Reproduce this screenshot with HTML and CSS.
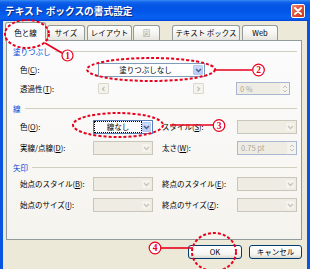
FILE: index.html
```html
<!DOCTYPE html>
<html lang="ja">
<head>
<meta charset="utf-8">
<title>テキスト ボックスの書式設定</title>
<link rel="stylesheet" href="styles.css">
</head>
<body>
<div class="window">
  <div class="titlebar">
    <span class="title">テキスト ボックスの書式設定</span>
    <span class="close"><svg width="8" height="8" viewBox="0 0 8 8"><path d="M1 1L7 7M7 1L1 7" stroke="#fff" stroke-width="1.8" stroke-linecap="round"/></svg></span>
  </div>
  <div class="client">
    <div class="tabs">
      <div class="tab active t1">色と線</div>
      <div class="tab t2">サイズ</div>
      <div class="tab t3">レイアウト</div>
      <div class="tab disabled t4">図</div>
      <div class="tab t5">テキスト ボックス</div>
      <div class="tab t6">Web</div>
    </div>
    <div class="panel">
      <div class="sec s1"><span class="sec-title">塗りつぶし</span><i class="rule"></i></div>
      <div class="frow r1">
        <span class="lbl fl">色(<u>C</u>):</span>
        <div class="combo wide"><span class="val">塗りつぶしなし</span><span class="arrow"><svg width="7" height="5" viewBox="0 0 7 5"><path d="M1 1L3.5 3.5L6 1" fill="none" stroke="#4D6185" stroke-width="1.5"/></svg></span></div>
      </div>
      <div class="frow r2">
        <span class="lbl fl">透過性(<u>T</u>):</span>
        <div class="slider">
          <span class="sbtn"><svg width="5" height="6" viewBox="0 0 5 6"><path d="M3.5 1L1.5 3L3.5 5" fill="none" stroke="#C2C0B4" stroke-width="1.3"/></svg></span>
          <span class="sbtn"><svg width="5" height="6" viewBox="0 0 5 6"><path d="M1.5 1L3.5 3L1.5 5" fill="none" stroke="#C2C0B4" stroke-width="1.3"/></svg></span>
        </div>
        <div class="spin s-a"><span class="val">0 %</span><span class="updown"><svg width="6" height="10" viewBox="0 0 6 10"><path d="M1 4L3 2L5 4M1 6L3 8L5 6" fill="none" stroke="#C2C0B4" stroke-width="1"/></svg></span></div>
      </div>

      <div class="sec s2"><span class="sec-title">線</span><i class="rule"></i></div>
      <div class="lrow r3">
        <span class="lbl ll">色(<u>O</u>):</span>
        <div class="combo focus"><span class="val"><span class="focusrect">線なし</span></span><span class="arrow"><svg width="7" height="5" viewBox="0 0 7 5"><path d="M1 1L3.5 3.5L6 1" fill="none" stroke="#4D6185" stroke-width="1.5"/></svg></span></div>
        <span class="lbl lr">スタイル(<u>S</u>):</span>
        <div class="combo dis"><span class="val"></span><span class="arrow"><svg width="7" height="5" viewBox="0 0 7 5"><path d="M1 1L3.5 3.5L6 1" fill="none" stroke="#C9C7BA" stroke-width="1.5"/></svg></span></div>
      </div>
      <div class="lrow r4">
        <span class="lbl ll">実線/点線(<u>D</u>):</span>
        <div class="combo dis"><span class="val"></span><span class="arrow"><svg width="7" height="5" viewBox="0 0 7 5"><path d="M1 1L3.5 3.5L6 1" fill="none" stroke="#C9C7BA" stroke-width="1.5"/></svg></span></div>
        <span class="lbl lr">太さ(<u>W</u>):</span>
        <div class="spin s-b"><span class="val">0.75 pt</span><span class="updown"><svg width="6" height="10" viewBox="0 0 6 10"><path d="M1 4L3 2L5 4M1 6L3 8L5 6" fill="none" stroke="#C2C0B4" stroke-width="1"/></svg></span></div>
      </div>

      <div class="sec s3"><span class="sec-title">矢印</span><i class="rule"></i></div>
      <div class="lrow r5">
        <span class="lbl ll">始点のスタイル(<u>B</u>):</span>
        <div class="combo dis"><span class="val"></span><span class="arrow"><svg width="7" height="5" viewBox="0 0 7 5"><path d="M1 1L3.5 3.5L6 1" fill="none" stroke="#C9C7BA" stroke-width="1.5"/></svg></span></div>
        <span class="lbl lr">終点のスタイル(<u>E</u>):</span>
        <div class="combo dis"><span class="val"></span><span class="arrow"><svg width="7" height="5" viewBox="0 0 7 5"><path d="M1 1L3.5 3.5L6 1" fill="none" stroke="#C9C7BA" stroke-width="1.5"/></svg></span></div>
      </div>
      <div class="lrow r6">
        <span class="lbl ll">始点のサイズ(<u>I</u>):</span>
        <div class="combo dis"><span class="val"></span><span class="arrow"><svg width="7" height="5" viewBox="0 0 7 5"><path d="M1 1L3.5 3.5L6 1" fill="none" stroke="#C9C7BA" stroke-width="1.5"/></svg></span></div>
        <span class="lbl lr">終点のサイズ(<u>Z</u>):</span>
        <div class="combo dis"><span class="val"></span><span class="arrow"><svg width="7" height="5" viewBox="0 0 7 5"><path d="M1 1L3.5 3.5L6 1" fill="none" stroke="#C9C7BA" stroke-width="1.5"/></svg></span></div>
      </div>
    </div>
    <div class="buttons">
      <button class="btn ok">OK</button>
      <button class="btn cancel">キャンセル</button>
    </div>
  </div>

  <svg class="annot" width="310" height="269" viewBox="0 0 310 269">
    <g fill="none" stroke="#E8001C" stroke-width="2" stroke-dasharray="3 2">
      <ellipse cx="27" cy="34" rx="22" ry="14"/>
      <ellipse cx="151" cy="69.5" rx="64" ry="11.5"/>
      <ellipse cx="118" cy="125" rx="45" ry="12"/>
      <ellipse cx="214" cy="252" rx="22" ry="19"/>
    </g>
    <g stroke="#E8001C" stroke-width="1.6">
      <line x1="45" y1="43" x2="62" y2="53"/>
      <line x1="215" y1="70" x2="252" y2="70"/>
      <line x1="170" y1="125" x2="213" y2="125"/>
      <line x1="161" y1="248" x2="193" y2="248"/>
    </g>
    <g fill="#fff" stroke="#E8001C" stroke-width="1.2">
      <circle cx="67.5" cy="55.5" r="5.5"/>
      <circle cx="258.5" cy="70" r="5.8"/>
      <circle cx="219" cy="125.5" r="5.8"/>
      <circle cx="155" cy="248" r="5.8"/>
    </g>
    <g class="num" fill="#E8001C" text-anchor="middle">
      <text x="67.5" y="58.8">1</text>
      <text x="258.5" y="73.3">2</text>
      <text x="219" y="128.8">3</text>
      <text x="155" y="251.3">4</text>
    </g>
  </svg>
</div>
</body>
</html>
```

FILE: styles.css
```css
* { box-sizing: border-box; margin: 0; padding: 0; }
html, body { width: 310px; height: 269px; overflow: hidden; }
body {
  font-family: "Noto Sans CJK JP", "Noto Sans", sans-serif;
  font-size: 7.5px;
  color: #000;
  background: #ECE9D8;
}
u { text-decoration: underline; text-underline-offset: 1px; }

.window {
  position: relative;
  width: 310px;
  height: 269px;
  display: flex;
  flex-direction: column;
}

.titlebar {
  height: 21px;
  flex: none;
  display: flex;
  align-items: center;
  justify-content: space-between;
  padding: 0 5px 0 5px;
  background: linear-gradient(#3B8CF4 0px, #1266EC 2px, #0556E4 5px, #0154E6 50%, #0760F0 80%, #055BEC 92%, #003FD4 100%);
}
.title {
  color: #fff;
  font-weight: bold;
  font-size: 9.7px;
  text-shadow: 1px 1px 0 #0A2A8C;
  white-space: nowrap;
}
.close {
  width: 14px;
  height: 14px;
  margin-top: 1px;
  border: 1px solid #fff;
  border-radius: 2px;
  background: linear-gradient(135deg, #F08B6C 0%, #E2553A 45%, #C9371A 100%);
  display: flex;
  align-items: center;
  justify-content: center;
}

.client {
  flex: 1;
  display: flex;
  flex-direction: column;
  border-left: 3px solid #0A55E0;
  border-right: 3px solid #0A55E0;
  padding: 1px 5px 0 3px;
  background: #ECE9D8;
}

.tabs {
  position: relative;
  z-index: 1;
  height: 18px;
  display: flex;
  align-items: flex-end;
  margin-left: -1px;
}
.tab {
  height: 15px;
  border: 1px solid #919B9C;
  border-bottom: none;
  border-radius: 3px 3px 0 0;
  background: linear-gradient(#FFFFFF, #F3F3EF 60%, #E6E5DE);
  display: flex;
  align-items: center;
  justify-content: center;
  white-space: nowrap;
  line-height: 1;
}
.tab.active {
  height: 19px;
  margin-bottom: -1px;
  padding-top: 2px;
  background: #FCFCFE;
}
.tab.disabled { color: #ACA899; }
.t1 { width: 41px; }
.t2 { width: 38px; margin-left: 1px; }
.t3 { width: 45px; margin-left: 2px; }
.t4 { width: 27px; margin-left: 1px; }
.t5 { width: 68px; margin-left: 12px; }
.t6 { width: 36px; margin-left: 2px; }

.panel {
  height: 200px;
  border: 1px solid #919B9C;
  background: linear-gradient(#FCFCFE, #F7F6F2 70%, #F4F3EE);
  display: flex;
  flex-direction: column;
  padding-top: 3px;
}

.sec {
  height: 14px;
  display: flex;
  align-items: center;
  padding: 0 4px 0 6px;
  color: #0046D5;
  flex: none;
}
.sec .rule {
  flex: 1;
  height: 1px;
  margin-left: 4px;
  background: #D0D0BF;
}
.s2 { margin-top: 6px; }
.s3 { margin-top: 5px; }

.frow, .lrow {
  display: flex;
  align-items: center;
  padding-left: 13px;
  flex: none;
}
.lbl { white-space: nowrap; line-height: 1; }
.fl { width: 78px; }
.ll { width: 73px; }
.lr { width: 75px; margin-left: 9px; }

.r1 { height: 14px; margin-top: 5px; }
.r2 { height: 13px; margin-top: 5px; }
.r3 { height: 14px; margin-top: 5px; }
.r4 { height: 14px; margin-top: 7px; }
.r5 { height: 14px; margin-top: 3px; }
.r6 { height: 14px; margin-top: 7px; }

.combo {
  width: 60px;
  height: 14px;
  display: flex;
  border: 1px solid #7F9DB9;
  background: #fff;
}
.combo.wide { width: 107px; }
.combo .val {
  flex: 1;
  display: flex;
  align-items: center;
  justify-content: center;
  white-space: nowrap;
  line-height: 1;
}
.combo .arrow {
  width: 10px;
  margin: 1px;
  border-radius: 1px;
  background: linear-gradient(#CCDBFD, #B9CCF8);
  border: 1px solid #B5C8F3;
  display: flex;
  align-items: center;
  justify-content: center;
}
.combo.focus { border-color: #5B7DB9; }
.focusrect {
  display: flex;
  align-items: center;
  justify-content: center;
  width: 46px;
  height: 10px;
  margin-left: 1px;
  outline: 1px dotted #000;
}
.combo.dis {
  border-color: #C9C7BA;
  background: #EFEDE3;
}
.combo.dis .arrow {
  background: #F4F3EE;
  border-color: #EDEBE2;
}

.slider {
  width: 106px;
  height: 11px;
  display: flex;
  justify-content: space-between;
}
.sbtn {
  width: 11px;
  height: 11px;
  border: 1px solid #DAD8CC;
  border-radius: 1px;
  background: #F4F3EE;
  display: flex;
  align-items: center;
  justify-content: center;
}

.spin {
  height: 13px;
  display: flex;
  border: 1px solid #A9B8D2;
  background: #EFEDE3;
  color: #ACA899;
}
.s-a { width: 54px; margin-left: 32px; }
.s-b { width: 60px; height: 14px; }
.spin .val {
  flex: 1;
  display: flex;
  align-items: center;
  padding-left: 3px;
  white-space: nowrap;
  line-height: 1;
}
.spin .updown {
  width: 9px;
  display: flex;
  align-items: center;
  justify-content: center;
  background: #F4F3EE;
}

.buttons {
  margin-top: 5px;
  display: flex;
  justify-content: flex-end;
  gap: 7px;
}
.btn {
  height: 14px;
  border: 1px solid #003C74;
  border-radius: 3px;
  background: linear-gradient(#FFFFFF, #F4F4F0 70%, #DCD8CC);
  font-family: "Noto Sans CJK JP", "Noto Sans", sans-serif;
  font-size: 7.5px;
  line-height: 1;
  color: #000;
  display: flex;
  align-items: center;
  justify-content: center;
}
.ok { width: 54px; }
.cancel { width: 53px; }

.annot {
  position: absolute;
  left: 0;
  top: 0;
  pointer-events: none;
  z-index: 5;
}
.num text {
  font-family: "Liberation Serif", serif;
  font-size: 9.5px;
  font-weight: bold;
}
```
